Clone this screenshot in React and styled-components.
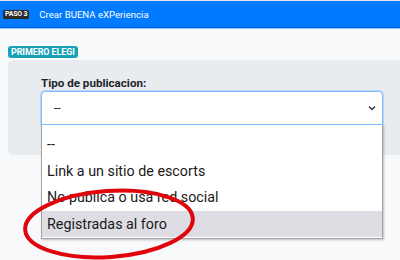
import React from 'react';
import styled, { createGlobalStyle } from 'styled-components';

const GlobalStyle = createGlobalStyle`
  * {
    box-sizing: border-box;
    margin: 0;
    padding: 0;
  }

  html, body {
    width: 400px;
    height: 260px;
    overflow: hidden;
    background: #f8f9fa;
    font-family: Roboto, "Liberation Sans", Arial, sans-serif;
  }
`;

const Page = styled.div`
  position: relative;
  width: 400px;
  height: 260px;
  border-top: 1px solid #e2e4e6;
`;

const Header = styled.header`
  display: flex;
  align-items: center;
  height: 27px;
  padding-left: 3px;
  background: #007bff;
  border-bottom: 1px solid #0062e6;
  box-shadow: 0 1px 0 #8cc3ff;
`;

const StepBadge = styled.span`
  display: inline-flex;
  align-items: center;
  height: 9px;
  padding: 0 2px;
  border-radius: 2px;
  background: #2d2a28;
  color: #fff;
  font-size: 7px;
  font-weight: 700;
  letter-spacing: -0.2px;
`;

const Title = styled.h1`
  margin-left: 10px;
  color: #fff;
  font-size: 9.6px;
  font-weight: 400;
`;

const Content = styled.main`
  padding: 18px 0 0 8px;
`;

const StageBadge = styled.span`
  display: flex;
  align-items: center;
  width: max-content;
  height: 12px;
  padding: 0 3px;
  border-radius: 3px;
  background: #17a2b8;
  color: #fff;
  font-size: 9px;
  font-weight: 700;
  letter-spacing: -0.1px;
`;

const Panel = styled.section`
  margin: 2px -12px 0 0;
  height: 95px;
  padding: 16px 0 0 33px;
  border-radius: 5px;
  background: #e9ecef;
`;

const Label = styled.label`
  display: block;
  margin-bottom: 1px;
  color: #212529;
  font-size: 11.6px;
  font-weight: 700;
`;

const SelectWrap = styled.div`
  position: relative;
  width: 342px;
`;

const SelectBox = styled.div`
  display: flex;
  align-items: center;
  justify-content: space-between;
  height: 34px;
  padding: 0 6px 0 12px;
  background: #fff;
  border: 1px solid #80bdff;
  border-radius: 4px 4px 0 0;
  box-shadow: 0 0 0 1px rgba(0, 123, 255, 0.2);
  color: #212529;
  font-size: 12px;
`;

const Chevron = styled.svg`
  width: 8px;
  height: 6px;
`;

const OptionList = styled.ul`
  position: absolute;
  top: 34px;
  left: 0;
  width: 342px;
  padding: 6px 0 1px;
  list-style: none;
  background: #fff;
  border: 1px solid #a3a3a3;
  border-top: none;
  box-shadow: 1px 1px 2px rgba(0, 0, 0, 0.25);
`;

const Option = styled.li`
  height: 26.5px;
  line-height: 26.5px;
  padding-left: 5px;
  background: ${p => (p.$active ? '#dedde3' : 'transparent')};
  color: #1a1a1a;
  font-size: 14.3px;
  white-space: nowrap;
`;

const Mark = styled.svg`
  position: absolute;
  left: 20px;
  top: 185px;
  width: 178px;
  height: 76px;
  pointer-events: none;
`;

const options = [
  '--',
  'Link a un sitio de escorts',
  'No publica o usa red social',
  'Registradas al foro',
];

const App = () => {
  return (
    <>
      <GlobalStyle />
      <Page>
        <Header>
          <StepBadge>PASO 3</StepBadge>
          <Title>Crear BUENA eXPeriencia</Title>
        </Header>
        <Content>
          <StageBadge>PRIMERO ELEGI</StageBadge>
          <Panel>
            <Label>Tipo de publicacion:</Label>
            <SelectWrap>
              <SelectBox>
                <span>--</span>
                <Chevron viewBox="0 0 8 6">
                  <path d="M1 1.5 L4 4.5 L7 1.5" fill="none" stroke="#333" strokeWidth="1.4" />
                </Chevron>
              </SelectBox>
              <OptionList>
                {options.map((o, i) => (
                  <Option key={o} $active={i === 3}>{o}</Option>
                ))}
              </OptionList>
            </SelectWrap>
          </Panel>
        </Content>
        <Mark viewBox="0 0 178 76">
          <ellipse
            cx="89"
            cy="38"
            rx="84"
            ry="33"
            fill="none"
            stroke="#e0040b"
            strokeWidth="4"
            transform="rotate(-4 89 38)"
          />
        </Mark>
      </Page>
    </>
  );
};

export default App;
